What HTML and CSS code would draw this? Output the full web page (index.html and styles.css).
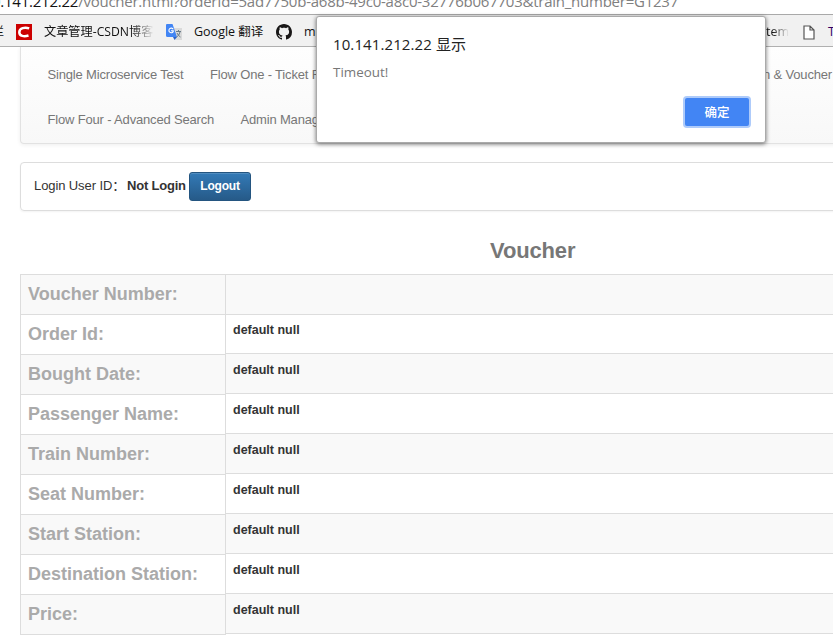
FILE: index.html
```html
<!DOCTYPE html>
<html lang="zh-CN">
<head>
<meta charset="utf-8">
<title>Voucher</title>
<link rel="stylesheet" href="styles.css">
</head>
<body>
<div class="address"><span class="host">0.141.212.22</span><span class="path">/voucher.html?orderId=5ad7750b-a68b-49c0-a8c0-32776b067703&amp;train_number=G1237</span></div>
<div class="bookmarks">
  <span class="bm-edge">栏</span>
  <svg class="ic-csdn" width="16" height="16" viewBox="0 0 16 16"><path fill="#c00" d="M0 0h16v16H0z"/><path d="M13.2 4.4C9 2.9 3.300 3.900 3.300 8.200C3.300 12.300 8.200 12.800 12.500 11.500" fill="none" stroke="#fff" stroke-width="2.500"/></svg>
  <span class="bm-csdn">文章管理-CSDN博客</span>
  <svg class="ic-trans" width="17" height="17" viewBox="0 0 17 17"><path fill="#dadada" d="M6 4h10v12H9z"/><path fill="#4285f4" d="M1 0h5.500l4.500 13H1.500Q0 13 0 11.500V1Q0 0 1 0z"/><path fill="#2a62c9" d="M7 13h4l-2.500 3z"/><path d="M7.200 5.200A2.300 2.300 0 1 0 7.200 7.600V6.700H5" fill="none" stroke="#fff" stroke-width="1.100"/><path d="M10 7.500h5M12.500 6v1.500M14 8q-1 4-3.500 5M11 9q1 2.500 3.500 4" fill="none" stroke="#687b89"/></svg>
  <span class="bm-google">Google 翻译</span>
  <svg class="ic-git" width="16" height="16" viewBox="0 0 16 16"><path fill="#191717" d="M8 0C3.580 0 0 3.580 0 8c0 3.540 2.290 6.530 5.470 7.590.4.070.55-.17.55-.38 0-.19-.01-.82-.01-1.490-2.010.37-2.530-.49-2.690-.94-.09-.23-.48-.94-.82-1.130-.28-.15-.68-.52-.01-.53.63-.01 1.080.58 1.230.82.72 1.210 1.870.87 2.330.66.070-.52.28-.87.51-1.070-1.780-.2-3.640-.89-3.640-3.950 0-.87.31-1.590.82-2.150-.08-.2-.36-1.020.08-2.120 0 0 .67-.21 2.200.82.64-.18 1.320-.27 2-.27s1.360.09 2 .27c1.530-1.040 2.200-.82 2.200-.82.44 1.100.16 1.920.08 2.120.51.56.82 1.270.82 2.150 0 3.070-1.870 3.750-3.650 3.950.29.25.54.73.54 1.480 0 1.070-.01 1.930-.01 2.200 0 .21.15.46.55.38A8.010 8.010 0 0 0 16 8c0-4.420-3.580-8-8-8z"/></svg>
  <span class="bm-mi">mi</span>
  <span class="bm-system">system</span>
  <svg class="ic-page" width="12" height="15" viewBox="0 0 12 15"><path d="M1 1h6l4 4v9H1zM7 1v4h4" fill="#fff" stroke="#555" stroke-width="1.200"/></svg>
  <span class="bm-t">T</span>
</div>
<main>
  <nav>
    <div class="row"><span class="n1">Single Microservice Test</span><span class="n2">Flow One - Ticket Reserve</span><span class="n3">Consign &amp; Voucher</span></div>
    <div class="row"><span class="n4">Flow Four - Advanced Search</span><span class="n5">Admin Management</span></div>
  </nav>
  <section class="login"><span class="uid">Login User ID<span class="colon">：</span></span><b class="status">Not Login</b><button class="logout">Logout</button></section>
  <h1><span>Voucher</span></h1>
  <div class="table">
    <div class="labels">
      <div>Voucher Number:</div><div>Order Id:</div><div>Bought Date:</div><div>Passenger Name:</div><div>Train Number:</div><div>Seat Number:</div><div>Start Station:</div><div>Destination Station:</div><div>Price:</div>
    </div>
    <div class="values">
      <div></div><div>default null</div><div>default null</div><div>default null</div><div>default null</div><div>default null</div><div>default null</div><div>default null</div><div>default null</div>
    </div>
  </div>
</main>
<div class="dialog">
  <div class="title">10.141.212.22 显示</div>
  <div class="msg">Timeout!</div>
  <button class="ok">确定</button>
</div>
</body>
</html>
```
FILE: styles.css
```css
* { box-sizing: border-box; }
body { margin: 0; width: 833px; height: 638px; overflow: hidden; background: #fff; color: #333; font: 13px/20px "Liberation Sans", sans-serif; position: relative; }
.address { height: 15px; overflow: hidden; border-bottom: 1px solid #a9a9a9; display: flex; align-items: flex-end; white-space: nowrap; font: 15px/26px "Open Sans", "Noto Sans", sans-serif; letter-spacing: -0.24px; color: #808080; }
.address span { flex: none; }
.host { color: #111; margin-left: -8px; }
.bookmarks { height: 32px; background: #f1f1f1; border-bottom: 1px solid #b0b0b0; display: flex; align-items: center; white-space: nowrap; overflow: hidden; color: #111; font: 12.5px/20px "Open Sans", "Noto Sans CJK SC", sans-serif; padding-top: 3px; }
.bookmarks > * { flex: none; }
.bm-edge { width: 4px; direction: rtl; overflow: hidden; font-size: 12px; }
.ic-csdn { margin-left: 12px; }
.bm-csdn { margin-left: 12px; width: 110px; overflow: hidden; font-size: 12.2px; -webkit-mask-image: linear-gradient(90deg, #000 80%, transparent); mask-image: linear-gradient(90deg, #000 80%, transparent); }
.ic-trans { margin-left: 12px; }
.bm-google { margin-left: 11px; width: 71px; }
.ic-git { margin-left: 11px; }
.bm-mi { margin-left: 12px; width: 443px; }
.bm-system { width: 42px; direction: rtl; overflow: hidden; -webkit-mask-image: linear-gradient(90deg, #000 60%, transparent); mask-image: linear-gradient(90deg, #000 60%, transparent); }
.ic-page { margin-left: 14px; }
.bm-t { margin-left: 13px; color: #306; }
main { padding-left: 20px; overflow: hidden; }
nav { width: 860px; height: 97px; padding: 5px 0 0 26.5px; border: 1px solid #e2e2e2; border-top: 0; border-radius: 0 0 4px 4px; background: linear-gradient(#fefefe, #f8f8f8); box-shadow: 0 1px 4px rgba(0,0,0,.07); color: #777; letter-spacing: -0.17px; }
.row { height: 45px; display: flex; align-items: center; white-space: nowrap; }
.n1 { width: 162.500px; }
.n2 { width: 472px; }
.n3 { width: 150px; text-align: right; }
.n4 { width: 193px; }
.login { width: 860px; height: 49px; margin-top: 18px; padding-left: 13px; border: 1px solid #ddd; border-radius: 4px; box-shadow: 0 1px 2px rgba(0,0,0,.05); display: flex; align-items: center; }
.uid { width: 93px; white-space: nowrap; letter-spacing: -0.1px; line-height: 18px; padding-bottom: 2px; }
.colon { font-family: "Noto Sans CJK SC", sans-serif; line-height: 1; }
.status { width: 62px; white-space: nowrap; letter-spacing: -0.2px; padding-bottom: 2px; }
.logout { width: 62px; height: 29px; padding: 0; border: 1px solid #245580; border-radius: 3px; background: linear-gradient(#337ab7, #265a88); color: #fff; font: bold 12px/24px "Liberation Sans", sans-serif; letter-spacing: -0.2px; padding-bottom: 2px; box-shadow: inset 0 1px 0 rgba(255,255,255,.15); }
h1 { margin: 27px 0 10px; padding-left: 470px; color: #777; font-size: 22px; line-height: 26px; letter-spacing: -0.15px; }
.table { display: flex; width: 860px; font-weight: bold; }
.labels { width: 206px; border: 1px solid #ddd; border-bottom: 0; color: #aaa; font-size: 18px; line-height: 38px; }
.labels div { height: 40px; padding-left: 7px; border-bottom: 1px solid #ddd; }
.values { flex: 1; border-top: 1px solid #ddd; font-size: 12.5px; line-height: 17px; }
.values div { height: 40px; padding: 8px 7px 0; border-bottom: 1px solid #ddd; }
.values div:nth-child(2) { height: 39px; padding-top: 7px; }
.labels div:nth-child(odd), .values div:nth-child(odd) { background: #f9f9f9; }
.dialog { position: absolute; left: 316px; top: 16px; width: 450px; height: 127px; padding: 16px 16px; background: #fff; border: 1px solid #aaa; border-radius: 3px; box-shadow: 0 1px 4px rgba(0,0,0,.55); font-family: "Open Sans", "Noto Sans CJK SC", sans-serif; }
.title { height: 22px; line-height: 22px; font-size: 15px; letter-spacing: 0.1px; color: #222; }
.msg { margin-top: 7px; font-size: 13.400px; line-height: 20px; color: #777; }
.ok { display: block; margin: 16px 0 0 352px; width: 64px; height: 28px; padding: 0; border: 0; border-radius: 2px; background: #4285f4; box-shadow: 0 0 0 2px #aecbfa; color: #fff; font: 500 12.5px/28px "Noto Sans CJK SC", sans-serif; }
```
